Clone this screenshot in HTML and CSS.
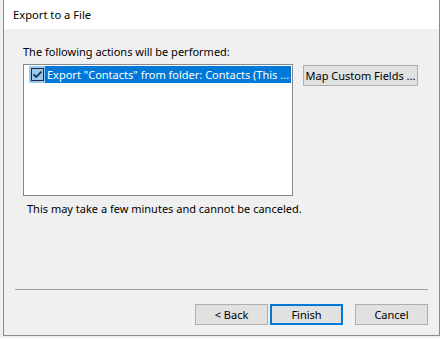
FILE: index.html
```html
<!DOCTYPE html>
<html>
<head>
<meta charset="utf-8">
<link rel="stylesheet" href="styles.css">
</head>
<body>
<div class="dialog">
  <div class="titlebar">Export to a File</div>
  <div class="content">
    <div class="label">The following actions will be performed:</div>
    <div class="mainrow">
      <div class="listbox">
        <div class="item">
          <span class="check"><svg width="13" height="13" viewBox="0 0 13 13"><rect x="0.5" y="0.5" width="12" height="12" fill="none" stroke="#1b2a44"/><path d="M2.6 6.4 L5.2 9 L10.4 3.6" fill="none" stroke="#1b2a44" stroke-width="1.7"/></svg></span>
          <span class="itemtext">Export "Contacts" from folder: Contacts (This ...</span>
        </div>
      </div>
      <button class="btn map">Map Custom Fields ...</button>
    </div>
    <div class="note">This may take a few minutes and cannot be canceled.</div>
  </div>
  <div class="separator"></div>
  <div class="buttons">
    <button class="btn">&lt; Back</button>
    <button class="btn default">Finish</button>
    <button class="btn cancel">Cancel</button>
  </div>
</div>
</body>
</html>
```
FILE: styles.css
```css
html, body {
  margin: 0;
  padding: 0;
  background: #f0f0f0;
  font-family: "Noto Sans", "Segoe UI", sans-serif;
  font-size: 11px;
  color: #000;
}
.dialog {
  margin-left: 3px;
  width: 435px;
  height: 335px;
  border: 1px solid #8c8c8c;
  border-top: none;
  background: #f0f0f0;
  display: flex;
  flex-direction: column;
}
.titlebar {
  height: 29px;
  flex: none;
  background: #fff;
  padding-left: 9px;
  line-height: 29px;
  font-size: 11.2px;
}
.content {
  padding: 15px 0 0 19px;
  height: 260px;
  flex: none;
  box-sizing: border-box;
}
.label {
  font-size: 11px;
  line-height: 16px;
  margin-bottom: 4px;
  white-space: nowrap;
}
.mainrow {
  display: flex;
  align-items: flex-start;
}
.listbox {
  border: 1px solid #828790;
  background: #fff;
  padding: 1px 1px 0 5px;
  box-sizing: content-box;
  width: 262px;
  height: 129px;
}
.item {
  display: flex;
  align-items: center;
  height: 17px;
  background: #0078d7;
  color: #fff;
  overflow: hidden;
}
.check {
  flex: none;
  width: 16px;
  height: 17px;
  display: flex;
  align-items: center;
  justify-content: center;
  background: #99c9ef;
}
.check svg { display: block; }
.itemtext {
  margin-left: 2px;
  white-space: nowrap;
}
.btn {
  font-family: inherit;
  font-size: 11px;
  background: #e1e1e1;
  border: 1px solid #adadad;
  color: #000;
  height: 21px;
  padding: 0;
  box-sizing: border-box;
  white-space: nowrap;
}
.map {
  flex: none;
  margin-left: 10px;
  margin-top: 1px;
  width: 115px;
}
.note {
  margin: 5px 0 0 4px;
  line-height: 15px;
  white-space: nowrap;
}
.separator {
  flex: none;
  margin: 0 11px;
  border-top: 1px solid #a0a0a0;
  height: 0;
}
.buttons {
  display: flex;
  justify-content: flex-end;
  padding: 14px 11px 0 0;
}
.buttons .btn {
  width: 73px;
}
.buttons .default {
  border: 2px solid #0078d7;
  margin-left: 2px;
}
.buttons .cancel {
  margin-left: 12px;
}
```
